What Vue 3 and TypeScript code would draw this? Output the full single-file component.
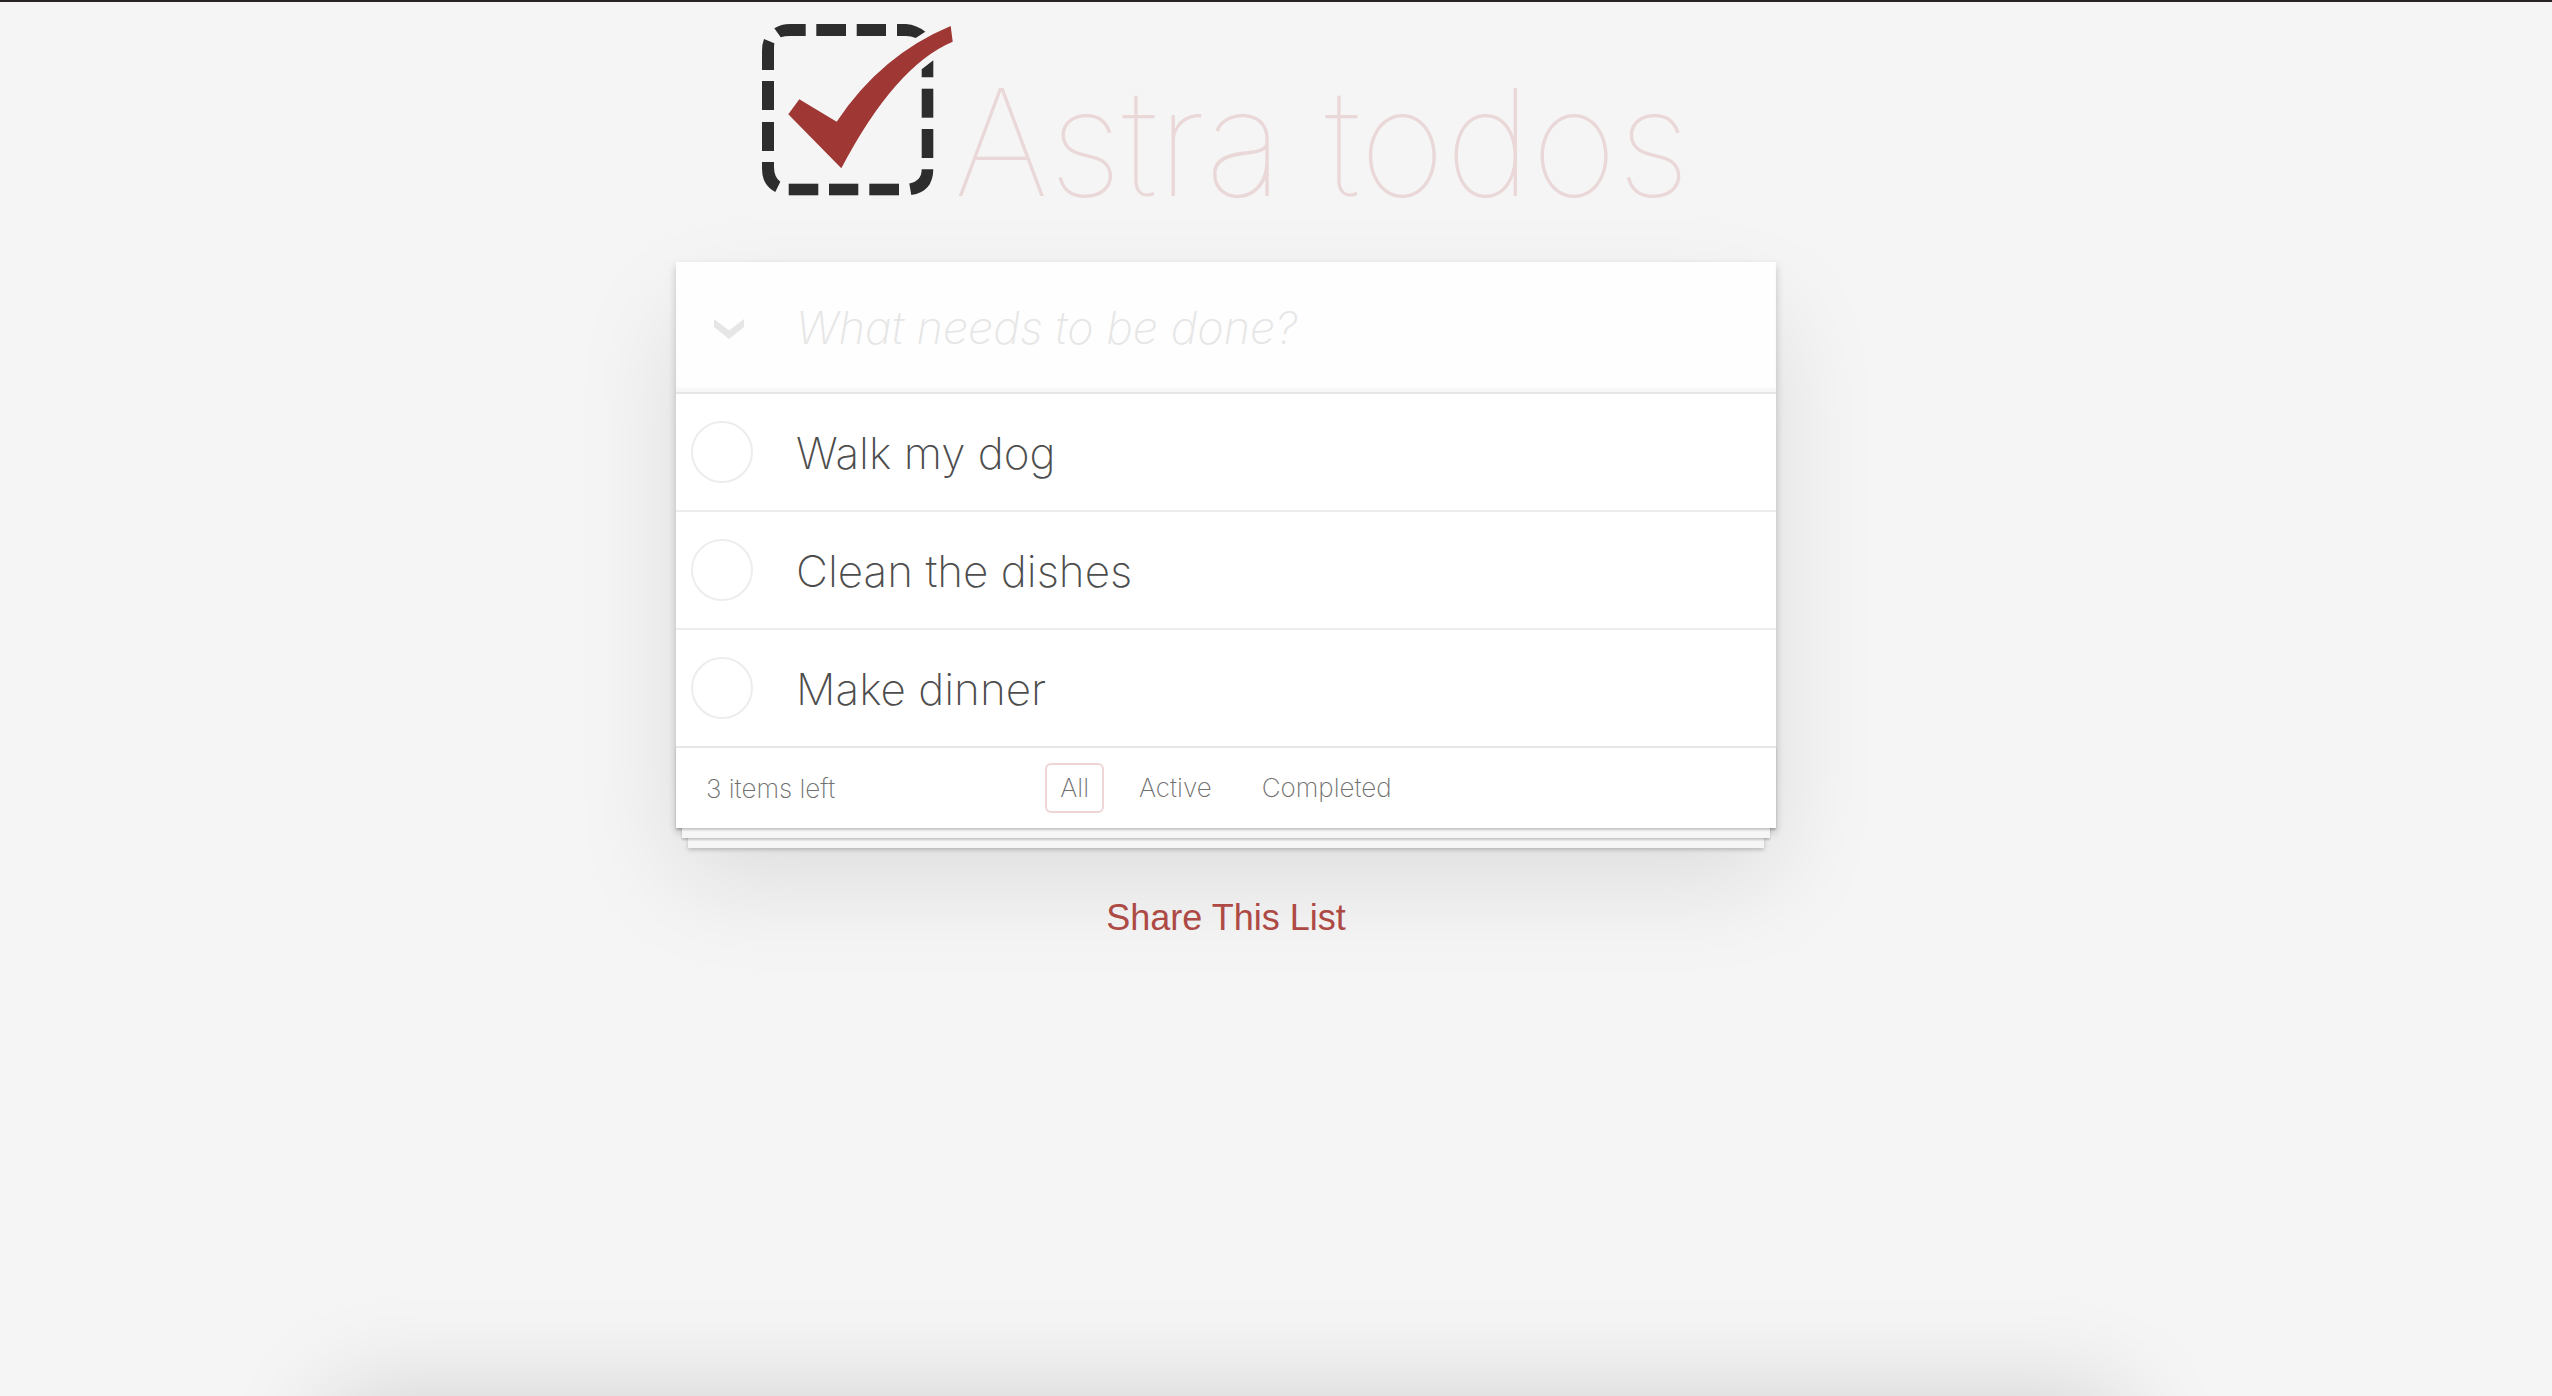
<script setup lang="ts">
import { computed, ref } from 'vue'

interface Todo {
  id: number
  title: string
  completed: boolean
}

type Filter = 'All' | 'Active' | 'Completed'

const filters: Filter[] = ['All', 'Active', 'Completed']
const filter = ref<Filter>('All')
const draft = ref('')
const todos = ref<Todo[]>([
  { id: 1, title: 'Walk my dog', completed: false },
  { id: 2, title: 'Clean the dishes', completed: false },
  { id: 3, title: 'Make dinner', completed: false },
])

const remaining = computed(() => todos.value.filter((t) => !t.completed).length)

const visible = computed(() =>
  todos.value.filter((t) =>
    filter.value === 'All' ? true : filter.value === 'Active' ? !t.completed : t.completed,
  ),
)

function addTodo(): void {
  const title = draft.value.trim()
  if (!title) return
  todos.value.push({ id: Date.now(), title, completed: false })
  draft.value = ''
}

function toggleAll(): void {
  const done = remaining.value > 0
  todos.value.forEach((t) => (t.completed = done))
}
</script>

<template>
  <div class="page">
    <main class="app">
      <header class="brand">
        <svg class="logo" viewBox="0 0 192 172" aria-hidden="true">
          <g fill="#2d2d2d">
            <path d="M12.3 4.3Q19 0 28 0H43.7V12H28Q23 12 18.7 13.3Z" />
            <path d="M54.3 0H84V12H54.3Z" />
            <path d="M94.7 0H124V12H94.7Z" />
            <path d="M135 0H144Q155 1 163.3 7.7L153.7 14Q149 12 144 12H135Z" />
            <path d="M2 15L12.3 19.3Q12 22 12 27V46H0V27Q0 20 2 15Z" />
            <path d="M0 57H12V86H0Z" />
            <path d="M0 98H12V127H0Z" />
            <path d="M0 138H12V143Q12 153 18.3 157.7L13.3 168Q0 161 0 145Z" />
            <path d="M26.7 159.7H56.3V171.3H26.7Z" />
            <path d="M67 159.7H96.3V171.3H67Z" />
            <path d="M107.3 159.7H137V171.3H107.3Z" />
            <path d="M149.3 171L147.3 159.5Q159.7 157 159.7 145.3H171.3Q171 168 149.3 171Z" />
            <path d="M159.7 105H171.3V134H159.7Z" />
            <path d="M159.7 64.7H171.3V93.7H159.7Z" />
            <path d="M159.7 45.3L171.3 36.3V53.3H159.7Z" />
          </g>
          <path
            fill="#9f3834"
            d="M26.3 90.3L37.3 75.3L74.7 97.7Q119 31 188.7 2L190.7 17.7Q133 42 79.3 144.3Z"
          />
        </svg>
        <h1>Astra todos</h1>
      </header>

      <section class="card">
        <form class="entry" @submit.prevent="addTodo">
          <button class="toggle-all" type="button" aria-label="Mark all as complete" @click="toggleAll">
            <svg viewBox="0 0 30 20" aria-hidden="true">
              <path d="M0 0L15 11.500L30 0V8L15 20L0 8Z" fill="#e6e6e6" />
            </svg>
          </button>
          <input
            v-model="draft"
            class="new-todo"
            type="text"
            aria-label="New todo"
            placeholder="What needs to be done?"
          />
        </form>

        <ul class="list">
          <li v-for="todo in visible" :key="todo.id" class="item">
            <input :id="`todo-${todo.id}`" v-model="todo.completed" class="check" type="checkbox" />
            <label :for="`todo-${todo.id}`" :class="{ done: todo.completed }">{{ todo.title }}</label>
          </li>
        </ul>

        <footer class="bar">
          <span class="count">{{ remaining }} {{ remaining === 1 ? 'item' : 'items' }} left</span>
          <nav class="filters">
            <a
              v-for="name in filters"
              :key="name"
              :href="`#${name.toLowerCase()}`"
              :class="{ selected: filter === name }"
              @click="filter = name"
              >{{ name }}</a
            >
          </nav>
        </footer>
      </section>

      <a class="share" href="#share">Share This List</a>
    </main>
  </div>
</template>

<style>
body {
  background: #f5f5f5;
}
</style>

<style scoped>
.page {
  position: relative;
  box-sizing: border-box;
  min-height: 100vh;
  padding-right: 100px;
  overflow: hidden;
  border-top: 2px solid #272325;
  background: #f5f5f5;
  color: #4d4d4d;
  font-family: Inter, 'Liberation Sans', sans-serif;
  font-weight: 200;
}

/* shadow of the panel that starts just below the fold */
.page::after {
  content: '';
  position: absolute;
  top: calc(100% + 4px);
  left: 330px;
  right: 430px;
  height: 400px;
  box-shadow: 0 0 100px rgba(0, 0, 0, 0.16);
}

.app {
  display: flex;
  flex-direction: column;
  align-items: center;
}

.brand {
  display: flex;
  align-items: baseline;
  height: 238px;
  padding-top: 22px;
  box-sizing: border-box;
}

.logo {
  width: 192px;
  height: 172px;
}

h1 {
  margin: 0;
  color: rgba(175, 47, 47, 0.15);
  font-size: 148px;
  font-weight: 100;
  line-height: 172px;
  white-space: nowrap;
}

.card {
  width: 100%;
  max-width: 1100px;
  margin-top: 22px;
  background: #fff;
  box-shadow:
    0 4px 8px rgba(0, 0, 0, 0.2),
    0 50px 100px rgba(0, 0, 0, 0.1);
}

.entry {
  display: flex;
  height: 130px;
  background: #fefefe;
  box-shadow: inset 0 -4px 2px rgba(0, 0, 0, 0.03);
}

.toggle-all {
  display: flex;
  align-items: center;
  justify-content: center;
  width: 120px;
  padding: 4px 14px 0 0;
  border: 0;
  background: none;
  cursor: pointer;
}

.toggle-all svg {
  width: 30px;
  height: 20px;
}

.new-todo {
  flex: 1;
  min-width: 0;
  padding: 0;
  border: 0;
  outline: 0;
  background: none;
  color: inherit;
  font: inherit;
  font-size: 45px;
}

.new-todo::placeholder {
  color: #e6e6e6;
  font-style: italic;
  opacity: 1;
}

.list {
  margin: 0;
  padding: 0;
  border-top: 2px solid #e6e6e6;
  list-style: none;
}

.item {
  display: flex;
  align-items: center;
  height: 116px;
  font-size: 44px;
}

.item label {
  padding-top: 2px;
}

.item + .item {
  border-top: 2px solid #ededed;
}

.check {
  width: 62px;
  height: 62px;
  margin: 0 43px 0 15px;
  border: 2px solid #ededed;
  border-radius: 50%;
  appearance: none;
}

.check:checked {
  border-color: #bddad5;
}

.done {
  color: #d9d9d9;
  text-decoration: line-through;
}

.bar {
  display: grid;
  grid-template-columns: 1fr auto 1fr;
  align-items: center;
  height: 80px;
  padding: 0 30px;
  border-top: 2px solid #e6e6e6;
  color: #707070;
  font-size: 26px;
  box-shadow:
    0 2px 2px rgba(0, 0, 0, 0.2),
    0 16px 0 -6px #f6f6f6,
    0 18px 2px -6px rgba(0, 0, 0, 0.2),
    0 32px 0 -12px #f6f6f6,
    0 34px 4px -12px rgba(0, 0, 0, 0.2);
}

.filters {
  display: flex;
  gap: 20px;
}

.filters a {
  padding: 6px 13px;
  border: 2px solid transparent;
  border-radius: 6px;
  color: inherit;
  line-height: 34px;
  text-decoration: none;
}

.filters .selected {
  border-color: rgba(175, 47, 47, 0.2);
}

.share {
  margin-top: 68px;
  color: #ad4a45;
  font-family: 'Liberation Sans', Arial, sans-serif;
  font-size: 36px;
  font-weight: 400;
  line-height: 44px;
  text-decoration: none;
}
</style>
